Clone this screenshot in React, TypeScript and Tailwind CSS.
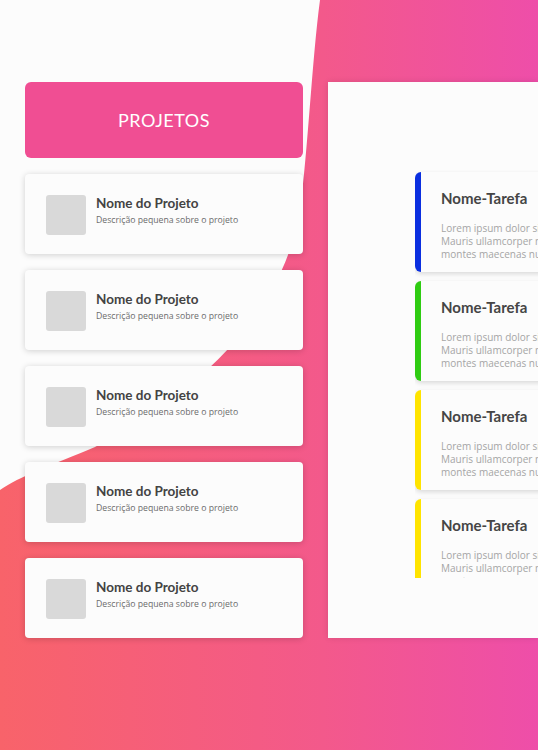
import React from 'react';

const tasks = [
  { id: 1, color: 'bg-[#0a2fe0]' },
  { id: 2, color: 'bg-[#2fcc12]' },
  { id: 3, color: 'bg-[#ffe400]' },
  { id: 4, color: 'bg-[#ffe400]' },
];

const projects = [1, 2, 3, 4, 5];

const ProjectCard: React.FC = () => (
  <div className="flex h-[80px] items-start gap-[10px] rounded-[4px] bg-[#fcfcfc] pl-[21px] pt-[21px] shadow-[0_1px_6px_rgba(0,0,0,0.18)]">
    <div className="h-[40px] w-[40px] shrink-0 rounded-[3px] bg-[#d9d9d9]" />
    <div className="flex flex-col">
      <span className="font-['Lato',sans-serif] text-[13.5px] font-bold leading-[16px] text-[#434343]">
        Nome do Projeto
      </span>
      <span className="mt-[3px] font-['Open_Sans',sans-serif] text-[8.7px] leading-[12px] text-[#6b6b6b]">
        Descrição pequena sobre o projeto
      </span>
    </div>
  </div>
);

const TaskCard: React.FC<{ color: string }> = ({ color }) => (
  <div className="flex h-[100px] w-[200px] shrink-0 overflow-hidden rounded-l-[6px] bg-[#fcfcfc] shadow-[0_2px_5px_rgba(0,0,0,0.14)]">
    <div className={`w-[6px] shrink-0 ${color}`} />
    <div className="flex flex-col whitespace-nowrap pl-[20px] pt-[17px]">
      <span className="font-['Lato',sans-serif] text-[15px] font-bold leading-[18px] text-[#454545]">
        Nome-Tarefa
      </span>
      <p className="mt-[15px] font-['Open_Sans',sans-serif] text-[10px] leading-[13px] text-[#a5a5a5]">
        Lorem ipsum dolor sit amet.
        <br />
        Mauris ullamcorper nisl at
        <br />
        montes maecenas nunc ut
      </p>
    </div>
  </div>
);

export default function App() {
  return (
    <div className="relative h-[750px] w-[538px] overflow-hidden bg-[#fcfcfc]">
      {/* background wave */}
      <svg className="absolute inset-0" width="538" height="750" viewBox="0 0 538 750">
        <defs>
          <linearGradient id="wave" gradientUnits="userSpaceOnUse" x1="0" y1="0" x2="538" y2="0">
            <stop offset="0" stopColor="#f8636a" />
            <stop offset="0.6" stopColor="#f3598b" />
            <stop offset="1" stopColor="#ee4ea9" />
          </linearGradient>
        </defs>
        <path
          d="M320 0 C312 60 308 150 300 210 C285 300 220 380 95 447 C50 466 20 476 0 490 L0 750 L538 750 L538 0 Z"
          fill="url(#wave)"
        />
      </svg>

      <div className="relative flex gap-[25px] pl-[25px] pt-[82px]">
        <div className="flex w-[278px] shrink-0 flex-col gap-4">
          <div className="flex h-[76px] items-center justify-center rounded-[6px] bg-[#f04e93]">
            <span className="font-['Lato',sans-serif] text-[18px] tracking-[0.5px] text-white">PROJETOS</span>
          </div>
          {projects.map((p) => (
            <ProjectCard key={p} />
          ))}
        </div>

        <div className="h-[556px] flex-1 overflow-hidden bg-[#fcfcfc] pl-[87px] pt-[88px] shadow-[0_0_6px_rgba(0,0,0,0.12)]">
          <div className="flex h-[408px] flex-col gap-[9px] overflow-hidden py-[2px]">
            {tasks.map((t) => (
              <TaskCard key={t.id} color={t.color} />
            ))}
          </div>
        </div>
      </div>
    </div>
  );
}
